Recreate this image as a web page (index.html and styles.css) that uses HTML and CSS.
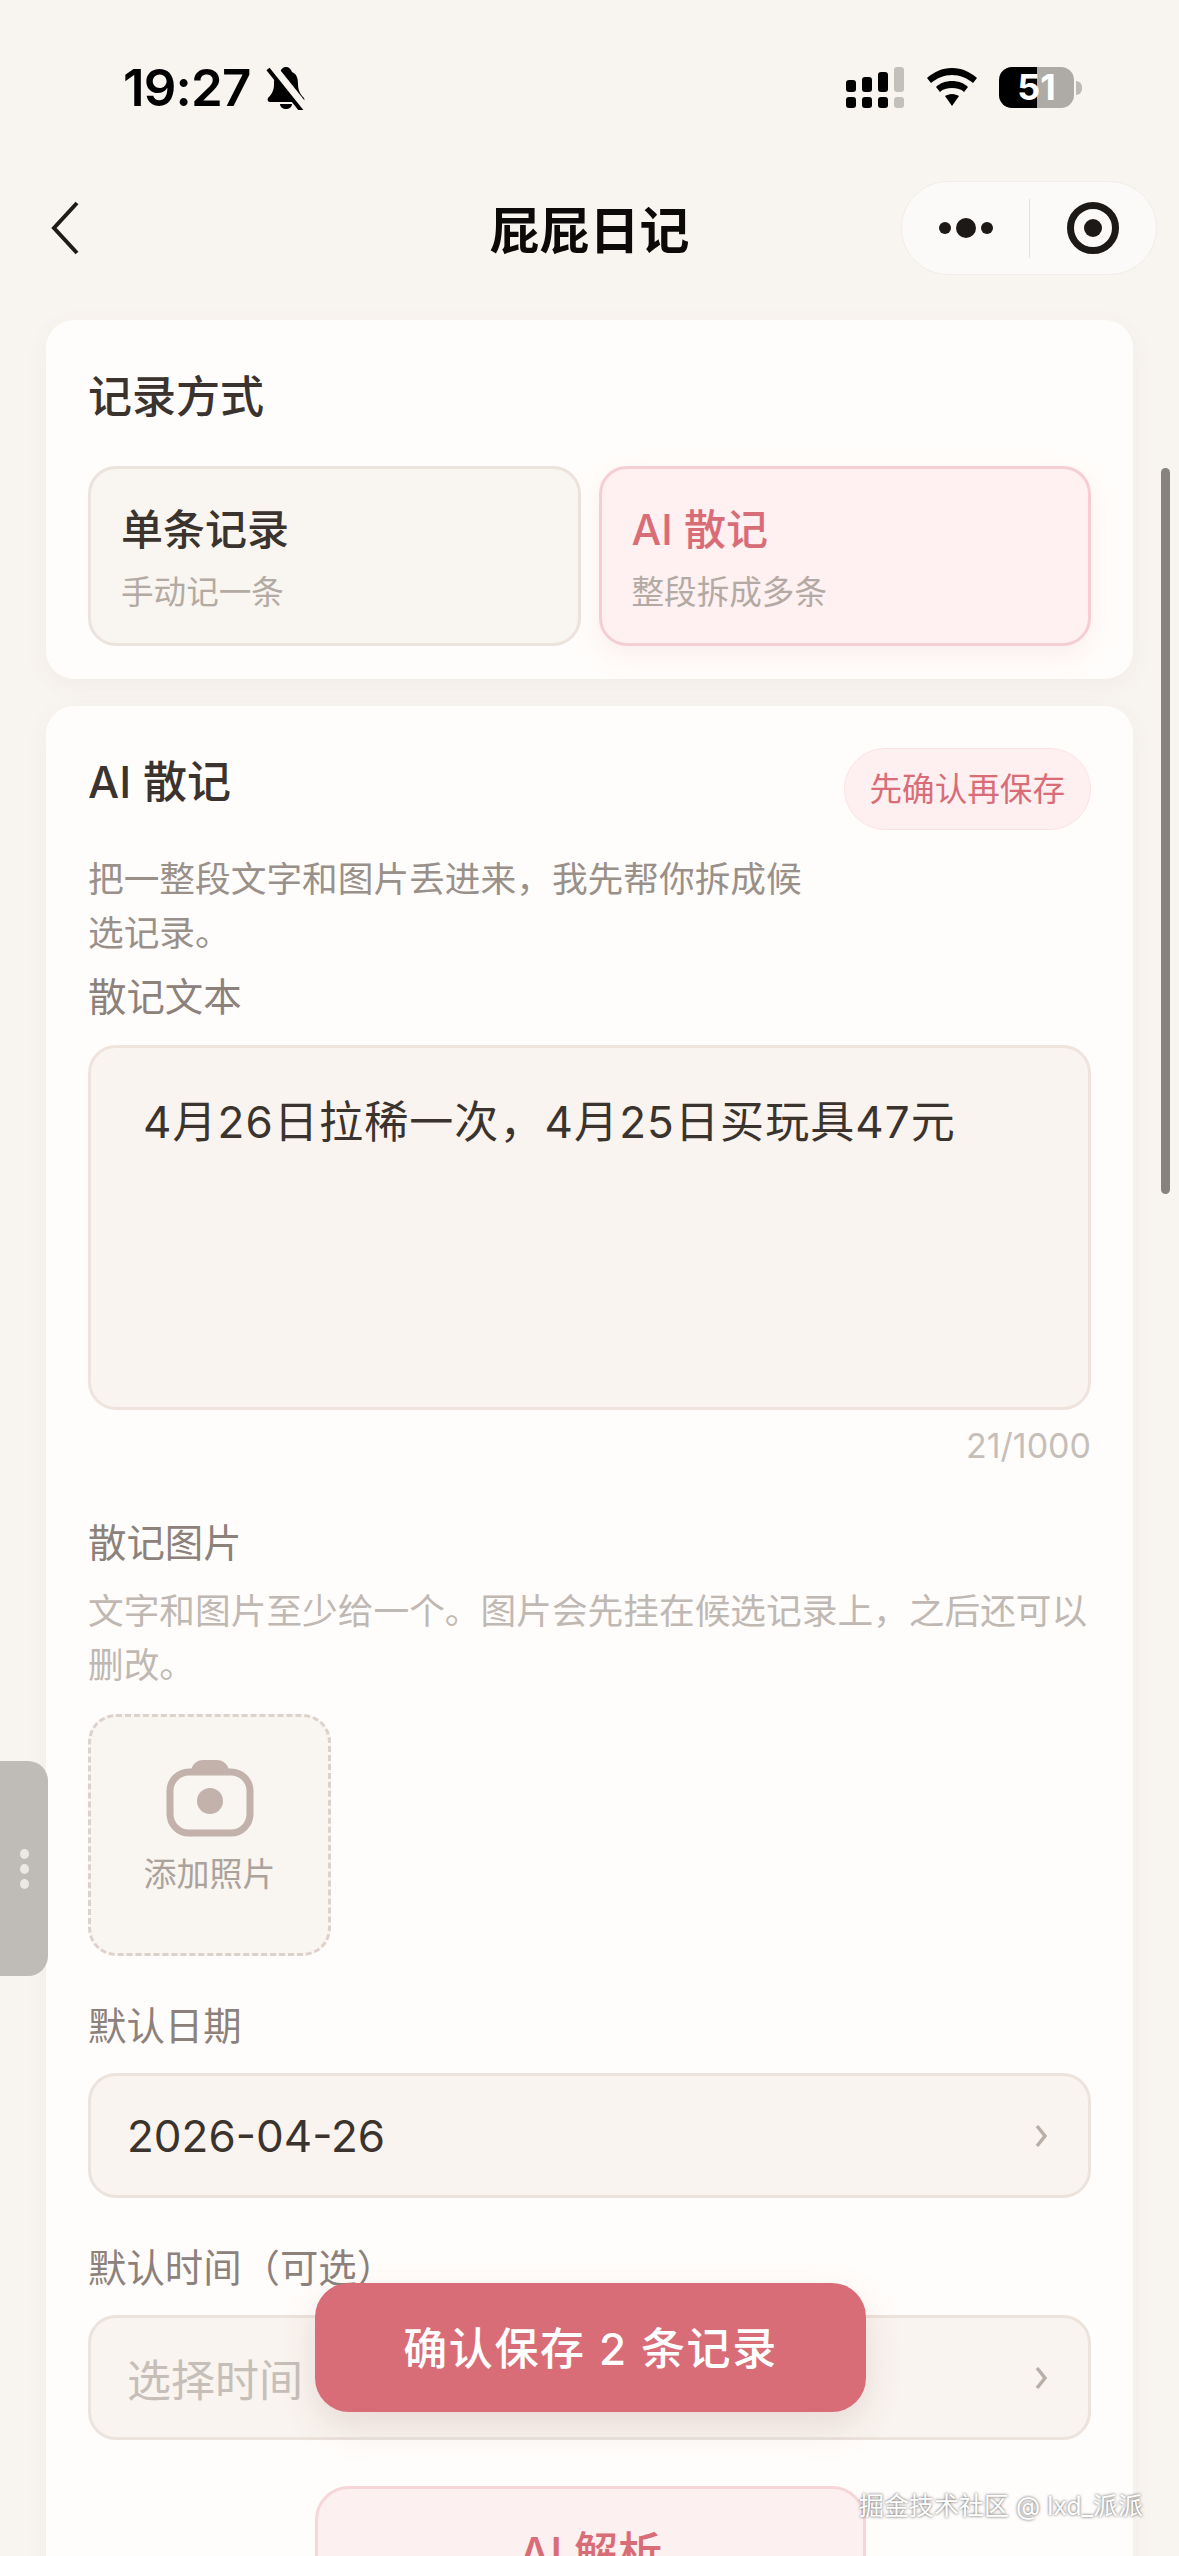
FILE: index.html
```html
<!DOCTYPE html>
<html lang="zh-CN">

<head>
    <meta charset="UTF-8">
    <meta name="viewport" content="width=device-width, initial-scale=1.0">
    <title>屁屁日记</title>
    <link rel="stylesheet" href="styles.css">
</head>

<body>
    <div class="page">
        <!-- 状态栏 -->
        <div class="status">
            <div class="status-left">
                <span class="time">19:27</span>
                <svg class="bell" width="40" height="44" viewBox="0 0 40 44">
                    <path d="M20 1c3 0 5 2 6 5 5 2 6 7 6 12 0 6 2 10 6 14 1 2 0 4-2 4H4c-2 0-3-2-2-4 4-4 6-8 6-14 0-5 1-10 6-12 1-3 3-5 6-5z" />
                    <path d="M14 38h12c0 3-3 5-6 5s-6-2-6-5z" />
                    <path class="bell-gap" d="M6 1l32 40" />
                    <path class="bell-line" d="M2 3l36 45" />
                </svg>
            </div>
            <div class="status-right">
                <svg class="signal" width="58" height="41" viewBox="0 0 58 41">
                    <rect x="0" y="13" width="10" height="12" rx="3" />
                    <rect x="16" y="10" width="10" height="15" rx="3" />
                    <rect x="32" y="5" width="10" height="20" rx="3" />
                    <rect class="off" x="48" y="0" width="10" height="25" rx="3" />
                    <rect x="0" y="30" width="10" height="11" rx="3" />
                    <rect x="16" y="30" width="10" height="11" rx="3" />
                    <rect x="32" y="30" width="10" height="11" rx="3" />
                    <rect class="off" x="48" y="30" width="10" height="11" rx="3" />
                </svg>
                <svg class="wifi" width="50" height="38" viewBox="0 0 50 38">
                    <path d="M25 0c10 0 18 4 25 10l-4 5c-6-5-13-8-21-8S10 10 4 15l-4-5C7 4 15 0 25 0z" />
                    <path d="M25 13c6 0 12 2 16 6l-4 5c-3-3-7-4-12-4s-9 1-12 4l-4-5c4-4 10-6 16-6z" />
                    <path d="M25 26c3 0 5 1 7 2l-7 10-7-10c2-1 4-2 7-2z" />
                </svg>
                <div class="battery">
                    <div class="battery-body"><span>51</span></div>
                    <div class="battery-nub"></div>
                </div>
            </div>
        </div>

        <!-- 导航 -->
        <div class="nav">
            <svg class="back" width="28" height="54" viewBox="0 0 28 54">
                <path d="M26 2L3 27l23 25" />
            </svg>
            <div class="nav-title">屁屁日记</div>
            <div class="capsule">
                <div class="capsule-more">
                    <i class="dot"></i><i class="dot big"></i><i class="dot"></i>
                </div>
                <div class="capsule-line"></div>
                <div class="capsule-close"><i></i></div>
            </div>
        </div>

        <div class="content">
            <div class="card card-mode">
                <div class="card-title">记录方式</div>
                <div class="mode-list">
                    <div class="mode">
                        <div class="mode-name">单条记录</div>
                        <div class="mode-desc">手动记一条</div>
                    </div>
                    <div class="mode active">
                        <div class="mode-name">AI 散记</div>
                        <div class="mode-desc">整段拆成多条</div>
                    </div>
                </div>
            </div>

            <div class="card card-form">
                <div class="form-head">
                    <div class="card-title">AI 散记</div>
                    <div class="pill">先确认再保存</div>
                </div>
                <div class="intro">把一整段文字和图片丢进来，我先帮你拆成候选记录。</div>

                <div class="label label-first">散记文本</div>
                <div class="textarea">4月26日拉稀一次，4月25日买玩具47元</div>
                <div class="count">21/1000</div>

                <div class="label label-image">散记图片</div>
                <div class="hint">文字和图片至少给一个。图片会先挂在候选记录上，之后还可以删改。</div>
                <div class="uploader">
                    <svg class="camera" width="88" height="78" viewBox="0 0 88 78">
                        <path class="camera-top" d="M25 12c1-7 6-11 12-11h14c6 0 11 4 12 11z" />
                        <rect class="camera-body" x="4" y="13" width="80" height="61" rx="19" />
                        <circle class="camera-lens" cx="44" cy="42" r="13" />
                    </svg>
                    <div class="uploader-text">添加照片</div>
                </div>

                <div class="label">默认日期</div>
                <div class="field">
                    <span>2026-04-26</span>
                    <svg class="arrow" width="14" height="24" viewBox="0 0 14 24">
                        <path d="M3 2l8 10-8 10" />
                    </svg>
                </div>

                <div class="label">默认时间（可选）</div>
                <div class="field">
                    <span class="placeholder">选择时间</span>
                    <svg class="arrow" width="14" height="24" viewBox="0 0 14 24">
                        <path d="M3 2l8 10-8 10" />
                    </svg>
                </div>
            </div>
        </div>

        <!-- 浮在内容上面的东西 -->
        <div class="scrollbar"></div>
        <div class="handle"><i></i><i></i><i></i></div>
        <div class="btn btn-save">确认保存 2 条记录</div>
        <div class="btn btn-parse">AI 解析</div>
        <div class="watermark">掘金技术社区 @ lxd_派派</div>
    </div>
</body>

</html>
```

FILE: styles.css
```css
* {
    margin: 0;
    padding: 0;
    box-sizing: border-box;
}

body {
    background-color: #f8f4ef;
    font-family: "Inter", "Noto Sans CJK SC", sans-serif;
    color: #3b332e;
}

.page {
    position: relative;
    width: 1179px;
    height: 2556px;
    overflow: hidden;
}

/* 状态栏 */
.status {
    height: 181px;
    padding: 67px 0 0 123px;
    display: flex;
    justify-content: space-between;
    align-items: flex-start;
    color: #000;
}

.status-left {
    display: flex;
    align-items: center;
    gap: 15px;
    height: 42px;
}

.time {
    font-size: 51px;
    line-height: 42px;
    font-weight: 600;
    letter-spacing: -0.8px;
}

.bell path {
    fill: #000;
}

.bell {
    overflow: hidden;
}

.bell .bell-gap,
.bell .bell-line {
    fill: none;
}

.bell .bell-gap {
    stroke: #f8f4ef;
    stroke-width: 9;
}

.bell .bell-line {
    stroke: #000;
    stroke-width: 4;
}

.status-right {
    width: 333px;
    display: flex;
    align-items: flex-start;
}

.signal rect {
    fill: #000;
}

.signal .off {
    fill: #c3c0bb;
}

.wifi {
    margin: 1px 0 0 23px;
}

.battery {
    margin-left: 22px;
    display: flex;
    align-items: center;
    height: 41px;
}

.battery-body {
    width: 75px;
    height: 41px;
    border-radius: 13px;
    background: linear-gradient(90deg, #000 0, #000 38px, #aeaba6 38px, #aeaba6 100%);
    color: #fff;
    font-size: 36px;
    font-weight: 700;
    line-height: 41px;
    text-align: center;
}

.battery-nub {
    width: 6px;
    height: 14px;
    margin-left: 2px;
    background-color: #bdbab5;
    border-radius: 0 7px 7px 0;
}

/* 导航 */
.nav {
    position: relative;
    height: 94px;
    display: flex;
    align-items: center;
    justify-content: center;
}

.back {
    position: absolute;
    left: 51px;
    top: 20px;
}

.back path {
    fill: none;
    stroke: #1f1b18;
    stroke-width: 4;
}

.nav-title {
    margin-top: -3px;
    font-size: 50px;
    font-weight: 600;
    color: #0c0a09;
}

.capsule {
    position: absolute;
    left: 901px;
    top: 0;
    width: 256px;
    height: 94px;
    display: flex;
    align-items: center;
    border: 1px solid #f1ede8;
    border-radius: 47px;
    background-color: #fbfaf8;
}

.capsule-more {
    width: 127px;
    display: flex;
    justify-content: center;
    align-items: center;
    gap: 5px;
}

.dot {
    width: 12px;
    height: 12px;
    border-radius: 50%;
    background-color: #1c1917;
}

.dot.big {
    width: 20px;
    height: 20px;
}

.capsule-line {
    width: 1px;
    height: 59px;
    background-color: #e4e0db;
}

.capsule-close {
    flex: 1;
    display: flex;
    justify-content: center;
}

.capsule-close i {
    width: 52px;
    height: 52px;
    border: 7px solid #1c1917;
    border-radius: 50%;
    display: flex;
    align-items: center;
    justify-content: center;
}

.capsule-close i::after {
    content: "";
    width: 18px;
    height: 18px;
    border-radius: 50%;
    background-color: #1c1917;
}

/* 内容 */
.content {
    padding: 45px 46px 0;
}

.card {
    padding: 0 42px;
    background-color: #fffdfb;
    border-radius: 28px;
    box-shadow: 0 6px 24px rgba(120, 100, 85, 0.05);
}

.card-mode {
    height: 359px;
    padding-top: 47px;
}

.card-form {
    margin-top: 27px;
    padding-top: 42px;
    padding-bottom: 240px;
}

.card-title {
    font-size: 44px;
    line-height: 60px;
    font-weight: 500;
    color: #3b332e;
}

.mode-list {
    margin-top: 39px;
    display: grid;
    grid-template-columns: 1fr 1fr;
    gap: 18px;
}

.mode {
    height: 180px;
    padding: 34px 30px 0;
    background-color: #f9f5f0;
    border: 3px solid #ebe3dc;
    border-radius: 28px;
}

.mode-name {
    font-size: 42px;
    line-height: 54px;
    font-weight: 500;
}

.mode-desc {
    margin-top: 13px;
    font-size: 32.6px;
    line-height: 44px;
    color: #b3aaa3;
}

.mode.active {
    background-color: #fff0f1;
    border-color: #f6cdd3;
    box-shadow: 0 10px 28px rgba(217, 109, 119, 0.1);
}

.mode.active .mode-name {
    color: #d96d77;
}

.form-head {
    display: flex;
    justify-content: space-between;
    align-items: flex-start;
}

.form-head .card-title {
    line-height: 68px;
}

.pill {
    height: 82px;
    padding: 0 25px;
    border: 1px solid #fbe3e5;
    border-radius: 41px;
    background-color: #fef0f1;
    color: #d96d77;
    font-size: 32.6px;
    line-height: 80px;
}

.intro {
    margin-top: 22px;
    width: 730px;
    font-size: 35.7px;
    line-height: 54px;
    color: #9a908a;
}

.label {
    margin-top: 43px;
    margin-bottom: 20px;
    font-size: 38.4px;
    line-height: 54px;
    color: #8c817b;
}

.label-first {
    margin-top: 10px;
    margin-bottom: 21px;
}

.label-image {
    margin-top: 50px;
    margin-bottom: 14px;
}

.textarea {
    height: 365px;
    padding: 44px 52px 0;
    background-color: #f9f4ef;
    border: 3px solid #efe3de;
    border-radius: 28px;
    font-size: 44px;
    line-height: 60px;
    letter-spacing: 1.1px;
}

.count {
    margin-top: 16px;
    text-align: right;
    font-size: 34px;
    line-height: 40px;
    color: #c6bfb9;
}

.hint {
    font-size: 35.7px;
    line-height: 54px;
    color: #c0b8b2;
}

.uploader {
    margin-top: 22px;
    width: 243px;
    height: 242px;
    padding-top: 42px;
    display: flex;
    flex-direction: column;
    align-items: center;
    background-color: #f9f5f1;
    border: 3px dashed #ddd2cb;
    border-radius: 28px;
}

.camera {
    display: block;
}

.camera-top {
    fill: #c2b2ab;
}

.camera-body {
    fill: #f9f5f1;
    stroke: #c2b2ab;
    stroke-width: 7;
}

.camera-lens {
    fill: #c2b2ab;
}

.uploader-text {
    margin-top: 15px;
    font-size: 33px;
    line-height: 44px;
    color: #aba29c;
}

.field {
    height: 125px;
    padding: 0 40px 0 36px;
    display: flex;
    justify-content: space-between;
    align-items: center;
    background-color: #f9f4ef;
    border: 3px solid #ebe3dc;
    border-radius: 28px;
    font-size: 44px;
}

.placeholder {
    color: #c6bfb9;
}

.arrow path {
    fill: none;
    stroke: #b8afa9;
    stroke-width: 3.5;
}

/* 浮层 */
.scrollbar {
    position: absolute;
    left: 1161px;
    top: 468px;
    width: 9px;
    height: 726px;
    border-radius: 5px;
    background-color: #87827e;
}

.handle {
    position: absolute;
    left: 0;
    top: 1761px;
    width: 48px;
    height: 215px;
    padding-top: 88px;
    display: flex;
    flex-direction: column;
    align-items: center;
    gap: 5px;
    background-color: #bfbbb6;
    border-radius: 0 20px 20px 0;
}

.handle i {
    width: 9px;
    height: 10px;
    border-radius: 50%;
    background-color: #ebe9e6;
}

.btn {
    position: absolute;
    left: 315px;
    width: 551px;
    text-align: center;
    border-radius: 34px;
    font-size: 44px;
    font-weight: 500;
}

.btn-save {
    top: 2283px;
    height: 129px;
    line-height: 133px;
    letter-spacing: 1.6px;
    background-color: #d96d77;
    color: #fff;
    box-shadow: 0 14px 36px rgba(150, 90, 90, 0.16);
}

.btn-parse {
    top: 2486px;
    height: 130px;
    line-height: 128px;
    background-color: #fdf0f0;
    border: 3px solid #f7d5d9;
    color: #d96d77;
}

.watermark {
    position: absolute;
    left: 859px;
    top: 2488px;
    font-size: 25px;
    line-height: 36px;
    color: #fff;
    white-space: nowrap;
    text-shadow: 0 0 3px rgba(0, 0, 0, 0.7);
}
```
